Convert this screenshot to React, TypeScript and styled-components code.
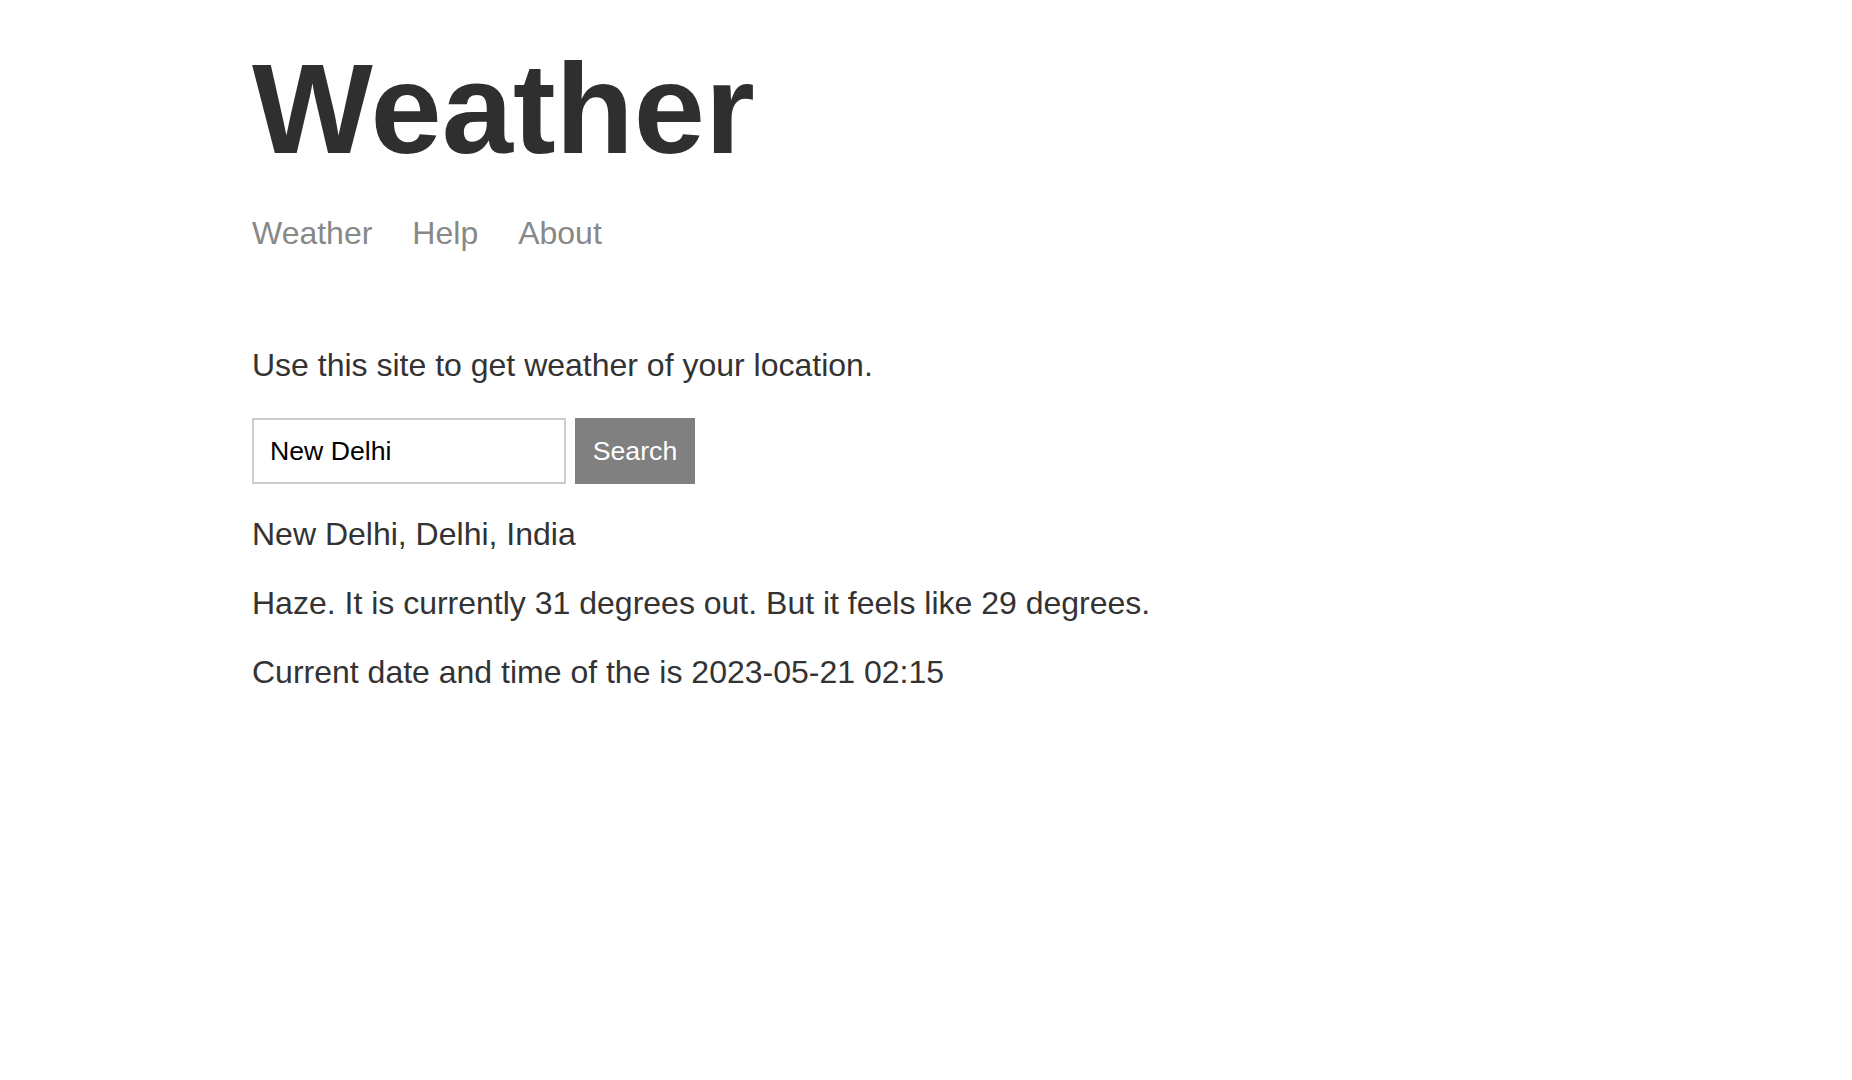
import React from "react";
import styled, { createGlobalStyle } from "styled-components";

const GlobalStyle = createGlobalStyle`
  html, body { margin: 0; padding: 0; background: #ffffff; }
  body { font-family: "Liberation Sans", Arial, sans-serif; color: #333333; }
  * { box-sizing: border-box; }
`;

const Page = styled.main`
  display: flex;
  flex-direction: column;
  align-items: flex-start;
  padding: 45px 252px 0;
`;

const Title = styled.h1`
  margin: 0;
  font-size: 128px;
  line-height: 128px;
  font-weight: 700;
  color: #2f2f2f;
`;

const Nav = styled.nav`
  display: flex;
  gap: 40px;
  margin-top: 42px;
`;

const NavLink = styled.a`
  font-size: 32px;
  line-height: 36px;
  color: #888888;
  text-decoration: none;
  cursor: pointer;
`;

const Text = styled.p<{ $top: number }>`
  margin: ${(p) => p.$top}px 0 0;
  font-size: 32px;
  line-height: 34px;
  color: #333333;
`;

const Form = styled.form`
  display: flex;
  gap: 9px;
  margin-top: 36px;
`;

const Input = styled.input`
  width: 314px;
  height: 66px;
  border: 2px solid #cccccc;
  padding: 0 16px;
  font-family: "Liberation Sans", Arial, sans-serif;
  font-size: 26.67px;
  color: #000000;
  outline: none;
`;

const Button = styled.button`
  width: 120px;
  height: 66px;
  border: none;
  background: #808080;
  color: #ffffff;
  font-family: "Liberation Sans", Arial, sans-serif;
  font-size: 26.67px;
  padding: 0;
  cursor: pointer;
`;

export default function App() {
  return (
    <>
      <GlobalStyle />
      <Page>
        <Title>Weather</Title>
        <Nav>
          <NavLink>Weather</NavLink>
          <NavLink>Help</NavLink>
          <NavLink>About</NavLink>
        </Nav>
        <Text $top={97}>Use this site to get weather of your location.</Text>
        <Form onSubmit={(e) => e.preventDefault()}>
          <Input defaultValue="New Delhi" />
          <Button type="submit">Search</Button>
        </Form>
        <Text $top={33}>New Delhi, Delhi, India</Text>
        <Text $top={35}>Haze. It is currently 31 degrees out. But it feels like 29 degrees.</Text>
        <Text $top={35}>Current date and time of the is 2023-05-21 02:15</Text>
      </Page>
    </>
  );
}
